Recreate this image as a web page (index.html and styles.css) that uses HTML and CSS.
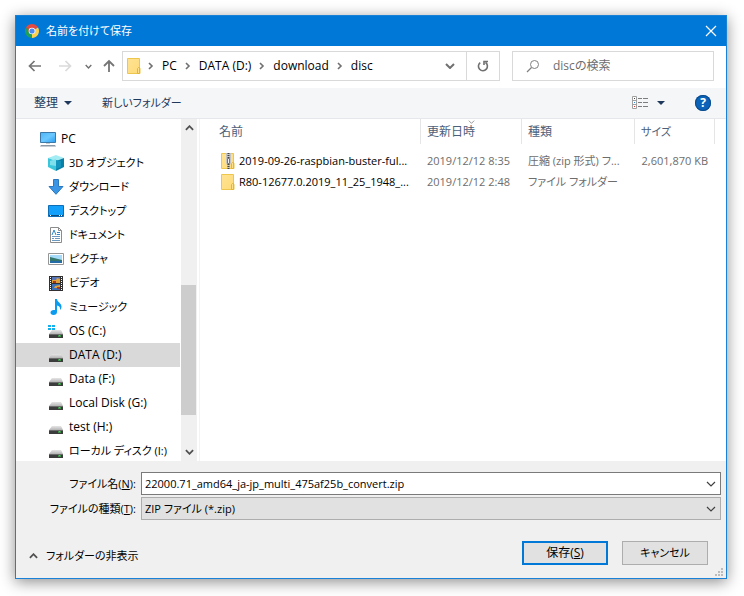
FILE: index.html
```html
<!DOCTYPE html>
<html lang="ja">
<head>
    <meta charset="UTF-8">
    <meta name="viewport" content="width=device-width, initial-scale=1.0">
    <title>名前を付けて保存</title>
    <link rel="stylesheet" href="styles.css">
</head>
<body>
    <!-- shared icons -->
    <svg class="sprite" aria-hidden="true">
        <linearGradient id="folder-fill" x1="0" y1="0" x2="1" y2="1">
            <stop offset="0" stop-color="#ffe394"/><stop offset="1" stop-color="#ffdb78"/>
        </linearGradient>
        <linearGradient id="drive-fill" x1="0" y1="0" x2="0" y2="1">
            <stop offset="0" stop-color="#e6e6e6"/><stop offset="1" stop-color="#b4b4b4"/>
        </linearGradient>
        <linearGradient id="screen-fill" x1="0" y1="0" x2="1" y2="1">
            <stop offset="0" stop-color="#4db4f6"/><stop offset="0.5" stop-color="#6cc9ff"/><stop offset="1" stop-color="#2b9df0"/>
        </linearGradient>
        <symbol id="folder" viewBox="0 0 16 16">
            <path d="M1.5 .5h12v9.5l.5.5v5h-12.5z" fill="url(#folder-fill)" stroke="#ecc64d"/>
            <path d="M11.500 15.500v-5l1-1h1v6z" fill="#ffe08a" stroke="#e3b53a"/>
        </symbol>
        <symbol id="drive" viewBox="0 0 16 16">
            <path d="M4 7h9l2 4H1z" fill="url(#drive-fill)"/>
            <path d="M1 11h14v4H1z" fill="#3c3c3c"/>
            <path d="M1 11h14v1H1z" fill="#6b6b6b"/>
            <path d="M11 12h1v1h-1z" fill="#35e04a"/>
            <path d="M10 12h3v2h-3z" fill="#35e04a" opacity=".5"/>
        </symbol>
        <symbol id="chev-right" viewBox="0 0 7 8">
            <path d="M2 1l3 3-3 3" fill="none" stroke="#707070" stroke-width="1.600"/>
        </symbol>
        <symbol id="chev-down" viewBox="0 0 10 6">
            <path d="M1 1l4 4 4-4" fill="none" stroke="currentColor" stroke-width="var(--w, 1.2)"/>
        </symbol>
    </svg>

    <main class="dialog">
        <header class="titlebar">
            <svg width="14" height="14" viewBox="0 0 14 14" aria-hidden="true">
                <path d="M7 7L.94 3.500A7 7 0 0 1 13.060 3.500z" fill="#e04a3f"/>
                <path d="M7 7L.94 3.500A7 7 0 0 0 7 14z" fill="#1fa05a"/>
                <path d="M7 7L13.060 3.500A7 7 0 0 1 7 14z" fill="#fdd04c"/>
                <path d="M1 3.500L4 8.700 7 7V3.500z" fill="#e04a3f" opacity=".6"/>
                <circle cx="7" cy="7" r="3.300" fill="#fff"/>
                <circle cx="7" cy="7" r="2.600" fill="#4a8af4"/>
            </svg>
            <h1>名前を付けて保存</h1>
            <button class="icon-btn close" aria-label="閉じる">
                <svg width="12" height="12" viewBox="0 0 12 12"><path d="M1 1l10 10M11 1L1 11" stroke="#fff" stroke-width="1.200"/></svg>
            </button>
        </header>

        <nav class="navbar">
            <button class="icon-btn back" aria-label="戻る">
                <svg width="14" height="12" viewBox="0 0 14 12"><path d="M13 6H2M6.500 1L1.500 6l5 5" fill="none" stroke="#757575" stroke-width="1.700"/></svg>
            </button>
            <button class="icon-btn forward" aria-label="進む" disabled>
                <svg width="14" height="12" viewBox="0 0 14 12"><path d="M1 6h11M7.500 1l5 5-5 5" fill="none" stroke="#dadada" stroke-width="1.700"/></svg>
            </button>
            <button class="icon-btn recent" aria-label="最近表示した場所">
                <svg class="bold" width="7" height="5"><use href="#chev-down"/></svg>
            </button>
            <button class="icon-btn up" aria-label="上へ">
                <svg width="12" height="14" viewBox="0 0 12 14"><path d="M6 13V2M1 7l5-5 5 5" fill="none" stroke="#757575" stroke-width="1.800"/></svg>
            </button>
            <div class="address">
                <svg width="16" height="16"><use href="#folder"/></svg>
                <svg class="sep first" width="7" height="8"><use href="#chev-right"/></svg>
                <a href="#">PC</a>
                <svg class="sep" width="7" height="8"><use href="#chev-right"/></svg>
                <a href="#">DATA (D:)</a>
                <svg class="sep" width="7" height="8"><use href="#chev-right"/></svg>
                <a href="#">download</a>
                <svg class="sep" width="7" height="8"><use href="#chev-right"/></svg>
                <a href="#">disc</a>
                <button class="icon-btn history" aria-label="履歴">
                    <svg class="bold" width="10" height="6"><use href="#chev-down"/></svg>
                </button>
                <button class="icon-btn refresh" aria-label="更新">
                    <svg width="12" height="12" viewBox="0 0 12 12"><path d="M3.200 2.600A4.500 4.500 0 1 0 8.500 2.500M7 5V1.500M6.200 1.500H11" fill="none" stroke="#707070" stroke-width="1.600"/></svg>
                </button>
            </div>
            <div class="search">
                <svg width="14" height="14" viewBox="0 0 14 14" aria-hidden="true"><circle cx="8.500" cy="5.500" r="4" fill="none" stroke="#808080"/><path d="M5.500 8.500L1 13" stroke="#808080" stroke-width="1.200"/></svg>
                <input type="text" placeholder="discの検索" aria-label="discの検索">
            </div>
        </nav>

        <div class="toolbar">
            <button class="tool">整理 <span class="caret"></span></button>
            <button class="tool kana">新しいフォルダー</button>
            <button class="tool view" aria-label="表示方法">
                <svg width="17" height="14" viewBox="0 0 17 14">
                    <path d="M.5.5h4v12h-4zM.5 4.500h4M.5 8.500h4" fill="#fff" stroke="#a0a0a0"/>
                    <path d="M6 2.500h4m1 0h5M6 6.500h4m1 0h5M6 10.500h4m1 0h5" stroke="#7d7d7d"/>
                    <path d="M2 2h1v1H2z" fill="#444"/><path d="M2 6h1v1H2z" fill="#2a8ade"/><path d="M2 10h1v1H2z" fill="#d33"/>
                </svg>
                <span class="caret"></span>
            </button>
            <button class="help" aria-label="ヘルプ">?</button>
        </div>

        <div class="content">
            <ul class="tree">
                <li class="root">
                    <svg width="16" height="16" viewBox="0 0 16 16"><path d="M.5 1.500h15v10H.5z" fill="url(#screen-fill)" stroke="#3c78a8"/><path d="M6 12h4v1H6z" fill="#c5ccd2"/><path d="M1 14h14l1 1.500H0z" fill="#8b98a5"/></svg>
                    PC
                </li>
                <li class="kana">
                    <svg width="16" height="16" viewBox="0 0 16 16"><path d="M0 3l8-3 8 3-8 3z" fill="#a4ecf3"/><path d="M0 3l8 3v10l-8-4z" fill="#3cc6dc"/><path d="M16 3L8 6v10l8-4z" fill="#0781a8"/><path d="M2 6l6-2v7l-6-1z" fill="#7fe0ec"/><path d="M8 5l5 1v6l-5 2z" fill="#1595bd"/></svg>
                    3D オブジェクト
                </li>
                <li class="kana">
                    <svg width="16" height="16" viewBox="0 0 16 16"><path d="M5.500.5h5v7h4.500L8 15.300 1 7.500h4.500z" fill="#3a95e4" stroke="#2a78c0"/></svg>
                    ダウンロード
                </li>
                <li class="kana">
                    <svg width="16" height="16" viewBox="0 0 16 16"><path d="M.5 2.500h15v11H.5z" fill="#12a0fb" stroke="#0e6db5"/><path d="M1 12h14v1H1z" fill="#0b4b80"/><path d="M2 12h1v1H2zm9 0h1v1h-1zm2 0h1v1h-1z" fill="#fff"/></svg>
                    デスクトップ
                </li>
                <li class="kana">
                    <svg width="16" height="16" viewBox="0 0 16 16"><path d="M2.500.5h8l3 3v12h-11z" fill="#fff" stroke="#8c8c8c"/><path d="M10.500.5v3h3" fill="none" stroke="#8c8c8c"/><path d="M4 8l2-5 2 5M9 5.500h3M9 7.500h3" fill="none" stroke="#2a87d0"/><path d="M4 9.500h8M4 11.500h2m1 0h5M4 13.500h8" stroke="#6a98c0"/></svg>
                    ドキュメント
                </li>
                <li class="kana">
                    <svg width="16" height="16" viewBox="0 0 16 16"><path d="M.5 2.500h15v11H.5z" fill="#fff" stroke="#969696"/><path d="M2 4h12v8H2z" fill="#a6dcfa"/><path d="M2 6l4 1 8 2v1H2z" fill="#34766b"/><path d="M2 10h12v2H2z" fill="#246ca8"/></svg>
                    ピクチャ
                </li>
                <li class="kana">
                    <svg width="16" height="16" viewBox="0 0 16 16"><path d="M1 1h14v15H1z" fill="#303030"/><path d="M4 2h8v6H4z" fill="#5877ba"/><path d="M4 9h8v6H4z" fill="#3d71b8"/><path d="M4 5h4l1-2 3 1v4H4zM7 11l5-1v3H6z" fill="#e0a13a"/><path d="M5 6h3v2H5zM9 12h3v2H9z" fill="#a93428"/><path d="M2.500 2v14M13.500 2v14" stroke="#fff" stroke-dasharray="1 1"/></svg>
                    ビデオ
                </li>
                <li class="kana">
                    <svg width="16" height="16" viewBox="0 0 16 16"><path d="M7 0h2c0 3 4.500 4 4.500 7.500 0 1.500-.5 2.500-1.500 3.500.5-3-1-4-3-4.500V13c0 2-1.500 3-3.500 3S2.500 15 2.500 13.500 4 11 5.500 11H7z" fill="#0b9cf0"/></svg>
                    ミュージック
                </li>
                <li>
                    <svg width="16" height="16" viewBox="0 0 16 16"><use href="#drive"/><path d="M0 2h3v2H0zm4 0h3v2H4zM0 5h3v2H0zm4 0h3v2H4z" fill="#12b1ee"/></svg>
                    OS (C:)
                </li>
                <li class="selected"><svg width="16" height="16"><use href="#drive"/></svg> DATA (D:)</li>
                <li><svg width="16" height="16"><use href="#drive"/></svg> Data (F:)</li>
                <li><svg width="16" height="16"><use href="#drive"/></svg> Local Disk (G:)</li>
                <li><svg width="16" height="16"><use href="#drive"/></svg> test (H:)</li>
                <li class="kana"><svg width="16" height="16"><use href="#drive"/></svg> ローカル ディスク (I:)</li>
            </ul>

            <div class="scrollbar" aria-hidden="true">
                <svg class="flip bold" width="9" height="6"><use href="#chev-down"/></svg>
                <div class="track"><div class="thumb"></div></div>
                <svg class="bold" width="9" height="6"><use href="#chev-down"/></svg>
            </div>

            <div class="files">
                <table>
                    <colgroup>
                        <col class="col-name"><col class="col-date"><col class="col-type"><col class="col-size"><col>
                    </colgroup>
                    <thead>
                        <tr>
                            <th>名前</th>
                            <th>更新日時<svg class="sort" width="7" height="4"><use href="#chev-down"/></svg></th>
                            <th>種類</th>
                            <th class="kana">サイズ</th>
                            <td></td>
                        </tr>
                    </thead>
                    <tbody>
                        <tr>
                            <td><div class="name">
                                <svg width="16" height="16" viewBox="0 0 16 16"><use href="#folder"/><path d="M6 0h5v10l-1 2v4H7v-4l-1-2z" fill="#c4c4c4"/><path d="M8.500 0v5M8.500 11v5" stroke="#444" stroke-width="2" stroke-dasharray="1 1"/><path d="M7.500 5.500h2v5h-2z" fill="#f0f0f0" stroke="#777"/></svg>
                                2019-09-26-raspbian-buster-ful...
                            </div></td>
                            <td>2019/12/12 8:35</td>
                            <td>圧縮 (zip 形式) フ...</td>
                            <td class="size">2,601,870 KB</td>
                            <td></td>
                        </tr>
                        <tr>
                            <td><div class="name">
                                <svg width="16" height="16"><use href="#folder"/></svg>
                                R80-12677.0.2019_11_25_1948_...
                            </div></td>
                            <td>2019/12/12 2:48</td>
                            <td>ファイル フォルダー</td>
                            <td></td>
                            <td></td>
                        </tr>
                    </tbody>
                </table>
            </div>
        </div>

        <form class="footer" onsubmit="return false">
            <div class="fields">
                <label for="filename">ファイル名(<u>N</u>):</label>
                <div class="combo">
                    <input type="text" id="filename" value="22000.71_amd64_ja-jp_multi_475af25b_convert.zip">
                    <svg width="10" height="6"><use href="#chev-down"/></svg>
                </div>
                <label for="filetype">ファイルの種類(<u>T</u>):</label>
                <div class="combo readonly">
                    <select id="filetype"><option>ZIP ファイル (*.zip)</option></select>
                    <svg width="10" height="6"><use href="#chev-down"/></svg>
                </div>
            </div>
            <div class="actions">
                <button type="button" class="toggle kana">
                    <svg class="flip bold" width="9" height="6"><use href="#chev-down"/></svg>
                    フォルダーの非表示
                </button>
                <button type="submit" class="btn primary">保存(<u>S</u>)</button>
                <button type="button" class="btn kana">キャンセル</button>
            </div>
            <svg class="grip" width="8" height="8" viewBox="0 0 8 8" aria-hidden="true"><path d="M6 0h2v2H6zM3 3h2v2H3zm3 0h2v2H6zM0 6h2v2H0zm3 0h2v2H3zm3 0h2v2H6z" fill="#bcbcbc"/></svg>
        </form>
    </main>
</body>
</html>
```
FILE: styles.css
```css
* {
    box-sizing: border-box;
}
body {
    margin: 0;
    padding: 15px 17px 17px 15px;
    background: #fff;
    font-family: "Open Sans", "Noto Sans CJK JP", sans-serif;
    font-size: 12px;
    line-height: 18px;
    font-feature-settings: "palt";
    color: #000;
}
button, input, select {
    font: inherit;
    font-feature-settings: inherit;
    color: inherit;
    margin: 0;
    padding: 0;
    border: none;
    background: none;
}
svg {
    flex: none;
    display: block;
}
a {
    color: inherit;
    text-decoration: none;
}
.sprite {
    position: absolute;
    width: 0;
    height: 0;
}
.kana {
    font-size: 11px;
}
.bold {
    --w: 2;
}
.flip {
    transform: rotate(180deg);
}
.icon-btn {
    display: flex;
    align-items: center;
    justify-content: center;
    align-self: stretch;
    color: #707070;
}
.dialog {
    border: 1px solid #1a82d6;
    background: #fff;
    box-shadow: 0 3px 14px rgba(0, 0, 0, 0.45);
}

/* title bar */
.titlebar {
    display: flex;
    align-items: center;
    gap: 7px;
    height: 30px;
    padding-left: 9px;
    background: #0078d7;
    color: #fff;
}
.titlebar h1 {
    flex: 1;
    margin: 0;
    font-size: 11px;
    font-weight: normal;
}
.close {
    width: 30px;
}

/* navigation row */
.navbar {
    display: flex;
    align-items: center;
    height: 42px;
    padding: 0 12px 2px 4px;
}
.back, .forward {
    width: 30px;
}
.recent {
    width: 16px;
}
.up {
    width: 26px;
}
.address, .search {
    display: flex;
    align-items: center;
    height: 30px;
    border: 1px solid #d9d9d9;
}
.address {
    flex: 1;
    padding-left: 3px;
}
.address .sep {
    margin: 0 8px 0 7px;
}
.address .first {
    margin-left: 5px;
}
.history {
    width: 32px;
    margin-left: auto;
}
.refresh {
    width: 33px;
    border-left: 1px solid #d9d9d9;
}
.search {
    width: 202px;
    margin-left: 12px;
    padding-left: 13px;
    gap: 13px;
}
.search input {
    flex: 1;
    min-width: 0;
    outline: none;
}
.search input::placeholder {
    color: #6d6d6d;
    opacity: 1;
}

/* toolbar */
.toolbar {
    display: flex;
    align-items: center;
    gap: 30px;
    height: 31px;
    padding: 0 15px 0 18px;
    background: #f5f6f7;
    border-bottom: 1px solid #e5e7ea;
    color: #1e395b;
}
.tool {
    display: flex;
    align-items: center;
    gap: 6px;
}
.caret {
    border: 4px solid transparent;
    border-top-color: #1e395b;
    border-bottom: none;
}
.view {
    gap: 8px;
    margin-left: auto;
}
.help {
    width: 16px;
    height: 16px;
    border-radius: 50%;
    background: #0a63b8;
    box-shadow: inset 0 0 0 1px #0b4a8a;
    color: #fff;
    font-weight: bold;
    line-height: 16px;
}

/* folder tree and file list */
.content {
    display: flex;
    height: 342px;
}
.tree {
    flex: none;
    width: 165px;
    margin: 0;
    padding: 8px 1px 0 0;
    list-style: none;
    overflow: hidden;
}
.tree li {
    display: flex;
    align-items: center;
    gap: 5px;
    height: 24px;
    padding-left: 32px;
    white-space: nowrap;
}
.tree .root {
    padding-left: 24px;
}
.tree .selected {
    background: #d9d9d9;
}
.scrollbar {
    display: flex;
    flex-direction: column;
    align-items: center;
    flex: none;
    width: 16px;
    padding: 6px 0;
    background: #f0f0f0;
    color: #505050;
}
.track {
    flex: 1;
    display: flex;
    align-items: flex-end;
    align-self: stretch;
    padding-bottom: 34px;
}
.thumb {
    width: 15px;
    height: 130px;
    background: #cdcdcd;
}
.files {
    flex: 1;
    min-width: 0;
    margin-left: 2px;
    border-left: 1px solid #f3f3f3;
}
table {
    width: 100%;
    table-layout: fixed;
    border-collapse: separate;
    border-spacing: 0;
}
.col-name {
    width: 221px;
}
.col-date {
    width: 101px;
}
.col-type {
    width: 113px;
}
.col-size {
    width: 80px;
}
th, td {
    padding: 0 0 0 6px;
    text-align: left;
    font-weight: normal;
    white-space: nowrap;
    color: #6d6d6d;
}
th:first-child {
    padding-left: 19px;
}
td:first-child {
    padding-left: 20px;
}
th {
    position: relative;
    height: 25px;
    border-right: 1px solid #e5e5e5;
    color: #4c607a;
}
.sort {
    position: absolute;
    top: 1px;
    left: 47px;
    color: #808080;
}
tbody {
    font-size: 11px;
}
tbody td {
    height: 21px;
}
tbody::before {
    content: "";
    display: block;
    height: 6px;
}
.name {
    display: flex;
    align-items: center;
    gap: 3px;
    color: #000;
}
.size {
    padding-right: 7px;
    text-align: right;
}

/* file name, type and buttons */
.footer {
    position: relative;
    padding: 11px 5px 13px;
    background: #f0f0f0;
}
.fields {
    display: grid;
    grid-template-columns: 115px 1fr;
    column-gap: 5px;
    row-gap: 2px;
    align-items: center;
    font-size: 11px;
}
.fields label {
    text-align: right;
}
.combo {
    display: grid;
    grid-template-columns: 1fr 18px;
    align-items: center;
    height: 23px;
    border: 1px solid #7a7a7a;
    background: #fff;
    color: #404040;
}
.combo.readonly {
    border-color: #adadad;
    background: #e1e1e1;
}
.combo input, .combo select {
    grid-area: 1 / 1 / 2 / 3;
    height: 21px;
    padding: 0 18px 0 3px;
    appearance: none;
    outline: none;
    color: #000;
}
.combo svg {
    grid-area: 1 / 2;
    justify-self: center;
    pointer-events: none;
}
.actions {
    display: flex;
    align-items: center;
    gap: 14px;
    margin-top: 21px;
    padding: 0 13px 0 8px;
}
.toggle {
    display: flex;
    align-items: center;
    gap: 8px;
    margin: 5px auto 0 0;
}
.toggle svg {
    color: #505050;
}
.btn {
    width: 86px;
    height: 24px;
    border: 1px solid #adadad;
    background: #e1e1e1;
}
.btn.primary {
    border: 2px solid #0078d7;
}
.grip {
    position: absolute;
    right: 3px;
    bottom: 2px;
}
```
